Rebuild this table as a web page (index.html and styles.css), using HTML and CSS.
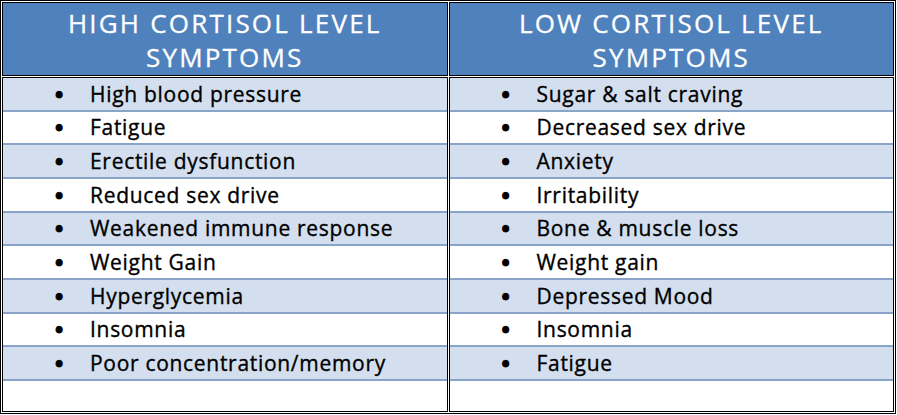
FILE: index.html
```html
<!DOCTYPE html>
<html>
<head>
<meta charset="utf-8">
<link rel="stylesheet" href="styles.css">
</head>
<body>
<table class="sym">
  <tr>
    <th class="head"><div class="head-text">HIGH CORTISOL LEVEL<br>SYMPTOMS</div></th>
    <th class="head"><div class="head-text">LOW CORTISOL LEVEL<br>SYMPTOMS</div></th>
  </tr>
  <tr>
    <td class="body">
      <ul class="list">
        <li class="row shade"><span class="dot">•</span>High blood pressure</li>
        <li class="row"><span class="dot">•</span>Fatigue</li>
        <li class="row shade"><span class="dot">•</span>Erectile dysfunction</li>
        <li class="row"><span class="dot">•</span>Reduced sex drive</li>
        <li class="row shade"><span class="dot">•</span>Weakened immune response</li>
        <li class="row"><span class="dot">•</span>Weight Gain</li>
        <li class="row shade"><span class="dot">•</span>Hyperglycemia</li>
        <li class="row"><span class="dot">•</span>Insomnia</li>
        <li class="row shade"><span class="dot">•</span>Poor concentration/memory</li>
      </ul>
    </td>
    <td class="body">
      <ul class="list">
        <li class="row shade"><span class="dot">•</span>Sugar &amp; salt craving</li>
        <li class="row"><span class="dot">•</span>Decreased sex drive</li>
        <li class="row shade"><span class="dot">•</span>Anxiety</li>
        <li class="row"><span class="dot">•</span>Irritability</li>
        <li class="row shade"><span class="dot">•</span>Bone &amp; muscle loss</li>
        <li class="row"><span class="dot">•</span>Weight gain</li>
        <li class="row shade"><span class="dot">•</span>Depressed Mood</li>
        <li class="row"><span class="dot">•</span>Insomnia</li>
        <li class="row shade"><span class="dot">•</span>Fatigue</li>
      </ul>
    </td>
  </tr>
</table>
</body>
</html>
```

FILE: styles.css
```css
html, body {
  margin: 0;
  padding: 0;
  background: #ffffff;
}

.sym {
  border-collapse: separate;
  border-spacing: 1px;
  border: 1px solid #000;
  width: 896px;
  height: 414px;
  font-family: "Open Sans", Lato, sans-serif;
}

.sym th, .sym td {
  border: 1px solid #000;
  padding: 0;
  width: 50%;
}

.head {
  background: #4f81bd;
  height: 72px;
  vertical-align: middle;
}

.head-text {
  color: #ffffff;
  font-weight: normal;
  font-size: 26px;
  line-height: 34px;
  letter-spacing: 2.2px;
  text-align: center;
  padding-top: 1px;
  -webkit-text-stroke: 0.3px #ffffff;
}

.body {
  vertical-align: top;
  background: #fff;
}

.list {
  list-style: none;
  margin: 0;
  padding: 0;
}

.row {
  display: flex;
  align-items: center;
  box-sizing: border-box;
  height: 33.67px;
  border-bottom: 2px solid #8aa3c8;
  font-size: 21px;
  line-height: 28px;
  letter-spacing: 0.7px;
  color: #000;
  background: #fff;
  -webkit-text-stroke: 0.35px #000;
}

.row.shade {
  background: #d3dfee;
}

.dot {
  flex: none;
  display: inline-block;
  box-sizing: border-box;
  width: 87px;
  padding-left: 52px;
  font-size: 22px;
  font-weight: 700;
  line-height: 28px;
  letter-spacing: 0;
  -webkit-text-stroke: 1px #000;
}
```
